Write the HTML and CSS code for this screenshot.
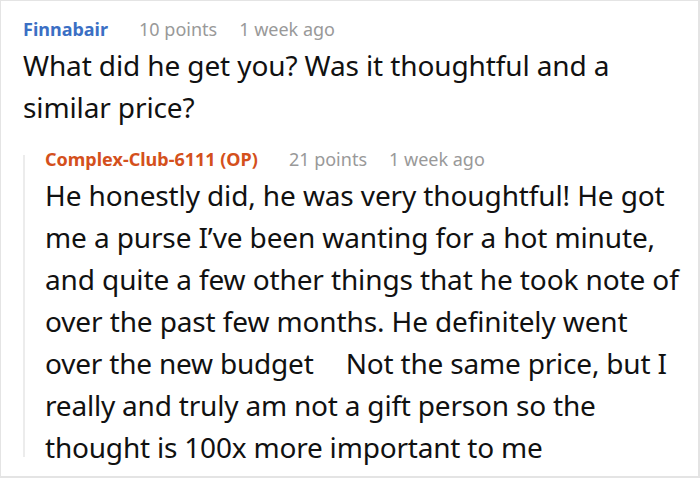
FILE: index.html
```html
<!DOCTYPE html>
<html lang="en">
<head>
<meta charset="utf-8">
<link rel="stylesheet" href="styles.css">
</head>
<body>
<div class="frame">
  <div class="comment">
    <div class="meta">
      <span class="author author-blue">Finnabair</span>
      <span class="points">10 points</span>
      <span class="time">1 week ago</span>
    </div>
    <p class="text">What did he get you? Was it thoughtful and a<br>similar price?</p>
    <div class="reply">
      <div class="thread"></div>
      <div class="reply-body">
        <div class="meta">
          <span class="author author-op">Complex-Club-6111 (OP)</span>
          <span class="points">21 points</span>
          <span class="time">1 week ago</span>
        </div>
        <p class="text">He honestly did, he was very thoughtful! He got<br>me a purse I’ve been wanting for a hot minute,<br>and quite a few other things that he took note of<br>over the past few months. He definitely went<br><span class="tight">over the new budget <span class="emoji"></span> Not the same price, but I</span><br><span class="tight">really and truly am not a gift person so the</span><br><span class="tight">thought is 100x more important to me</span></p>
      </div>
    </div>
  </div>
</div>
</body>
</html>
```
FILE: styles.css
```css
html, body {
  margin: 0;
  padding: 0;
  background: #ffffff;
}
.frame {
  box-sizing: border-box;
  width: 700px;
  height: 478px;
  border: 1px solid #e4e4e4;
  border-right-width: 2px;
  border-bottom-width: 2px;
  overflow: hidden;
  font-family: "Noto Sans", "Open Sans", sans-serif;
  color: #111111;
}
.comment {
  padding: 16px 0 0 22px;
}
.meta {
  display: flex;
  align-items: baseline;
  font-size: 18px;
  line-height: 24px;
  white-space: nowrap;
}
.author {
  font-weight: 700;
  margin-right: 31px;
}
.author-blue { color: #3b6fc4; }
.author-op { color: #d4501c; }
.points {
  color: #999999;
  margin-right: 22px;
}
.time { color: #999999; }
.text {
  margin: 3px 0 0 0;
  font-size: 28px;
  line-height: 42px;
  letter-spacing: -0.12px;
  white-space: nowrap;
}
.reply {
  display: flex;
  margin-top: 19px;
}
.thread {
  width: 2px;
  flex: none;
  background: #ececec;
  margin: 8px 0 11px 0;
}
.reply-body {
  padding-left: 20px;
  flex: 1;
}
.tight {
  letter-spacing: -0.2px;
}
.emoji {
  display: inline-block;
  width: 18px;
}
```
